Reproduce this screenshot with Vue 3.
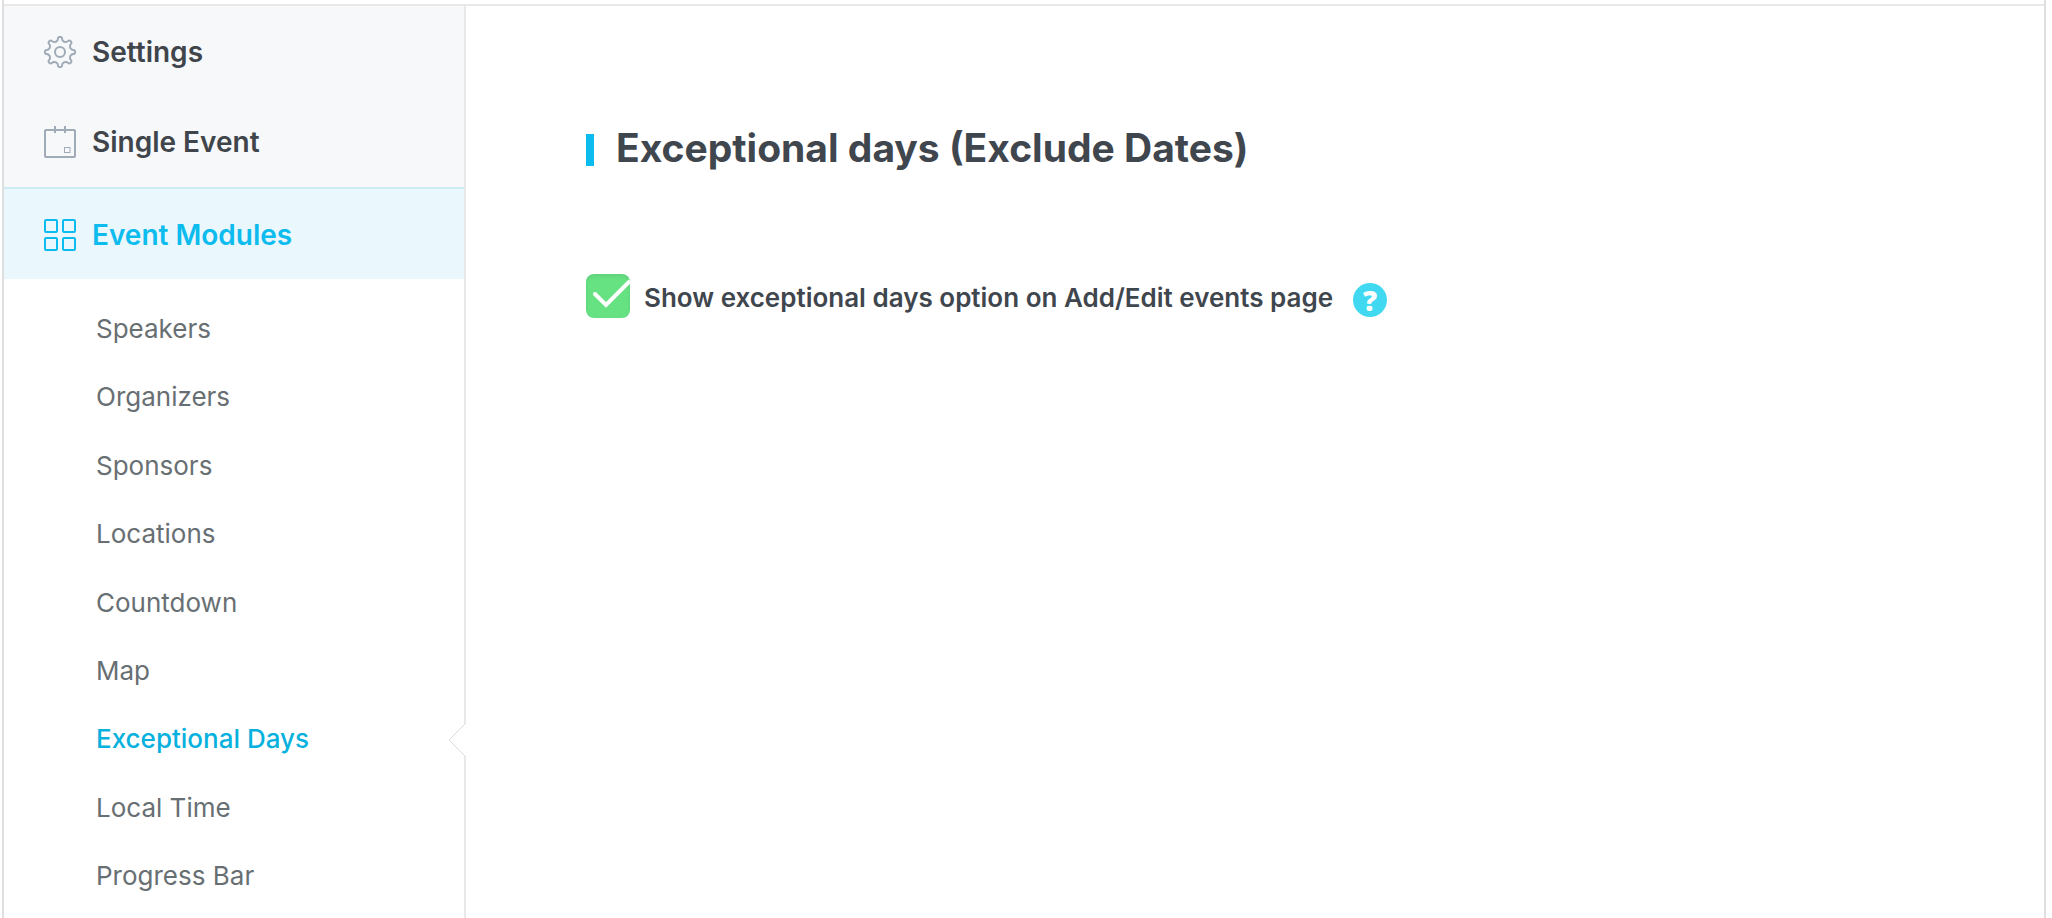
<template>
  <div class="settings-page">
    <div class="panel">
      <nav class="sidebar">
        <a v-for="item in sections" :key="item.id" href="#" class="section"
          :class="{ active: item.id === activeSection }" @click.prevent="activeSection = item.id">
          <svg v-if="item.id === 'settings'" class="icon" viewBox="0 0 32 32">
            <circle cx="16" cy="16" r="5" />
            <path :d="gearPath" />
          </svg>
          <svg v-else-if="item.id === 'single'" class="icon" viewBox="0 0 32 32">
            <rect x="1" y="4" width="30" height="27" rx="1" />
            <path d="M11 0v7M21 0v7" />
            <rect class="thin" x="20.5" y="21.5" width="5.5" height="5" />
          </svg>
          <svg v-else class="icon" viewBox="0 0 32 32">
            <rect x="1" y="1" width="12" height="12" rx="1" />
            <rect x="19" y="1" width="12" height="12" rx="1" />
            <rect x="1" y="19" width="12" height="12" rx="1" />
            <rect x="19" y="19" width="12" height="12" rx="1" />
          </svg>
          <span>{{ item.label }}</span>
        </a>

        <ul class="modules">
          <li v-for="name in modules" :key="name" :class="{ active: name === activeModule }">
            <a href="#" @click.prevent="activeModule = name">{{ name }}</a>
            <svg v-if="name === activeModule" class="notch" viewBox="0 0 18 34">
              <path class="notch-fill" d="M18 1H16V1L1 17L16 33H18Z" />
              <path class="notch-line" d="M17 1L1 17L17 33" />
            </svg>
          </li>
        </ul>
      </nav>

      <main class="content">
        <h4>Exceptional days (Exclude Dates)</h4>
        <div class="option">
          <input id="exceptional-days" v-model="enabled" type="checkbox">
          <svg v-if="enabled" class="tick" viewBox="0 0 44 44">
            <path d="M9 20L20 31L44 7" />
            <circle cx="9" cy="20" r="2" />
          </svg>
          <label for="exceptional-days">Show exceptional days option on Add/Edit events page</label>
          <button type="button" class="help" aria-label="Help">?</button>
        </div>
      </main>
    </div>
  </div>
</template>

<script setup>
import { ref } from 'vue'

const sections = [
  { id: 'settings', label: 'Settings' },
  { id: 'single', label: 'Single Event' },
  { id: 'modules', label: 'Event Modules' }
]

const modules = [
  'Speakers',
  'Organizers',
  'Sponsors',
  'Locations',
  'Countdown',
  'Map',
  'Exceptional Days',
  'Local Time',
  'Progress Bar'
]

const activeSection = ref('modules')
const activeModule = ref('Exceptional Days')
const enabled = ref(true)

// eight rounded teeth, one every 45 degrees
function buildGear() {
  const at = (r, deg) => {
    const a = (deg * Math.PI) / 180
    return `${(16 + r * Math.cos(a)).toFixed(2)} ${(16 + r * Math.sin(a)).toFixed(2)}`
  }
  let d = `M${at(11.6, -15)}`
  for (let i = 0; i < 8; i++) {
    const t = i * 45
    d += `Q${at(12, -10 + t)} ${at(13.4, -9 + t)}`
    d += `Q${at(15.2, -8 + t)} ${at(15.2, t)}`
    d += `Q${at(15.2, 8 + t)} ${at(13.4, 9 + t)}`
    d += `Q${at(12, 10 + t)} ${at(11.6, 15 + t)}`
    d += `Q${at(10.6, 22.5 + t)} ${at(11.6, 30 + t)}`
  }
  return d + 'Z'
}
const gearPath = buildGear()
</script>

<style>
body {
  margin: 0;
  background: #fff;
}
</style>

<style scoped>
.settings-page {
  box-sizing: border-box;
  height: 100vh;
  overflow: hidden;
  padding: 0 6px 0 2px;
  font-family: Inter, "Liberation Sans", sans-serif;
}

.panel {
  display: flex;
  box-sizing: border-box;
  min-height: 100%;
  padding-top: 4px;
  border: solid #dfdfdf;
  border-width: 0 2px;
  background: linear-gradient(#e8e8e8, #e8e8e8) 0 4px / 100% 2px no-repeat;
}

.sidebar {
  flex: 0 0 460px;
  padding-top: 2px;
  border-right: 2px solid #e8e8e8;
}

.section {
  display: flex;
  align-items: center;
  gap: 16px;
  height: 90px;
  padding-left: 40px;
  background: #f7f8fa;
  color: #3f454a;
  font-size: 28px;
  font-weight: 600;
  text-decoration: none;
}

.section:first-child {
  padding-top: 1px;
}

.section.active {
  height: 88px;
  padding-top: 2px;
  border-top: 2px solid #cdecf4;
  background: #eaf7fc;
  color: #0dbcee;
}

.icon {
  width: 32px;
  height: 32px;
  fill: none;
  stroke: #a0abb8;
  stroke-width: 2;
}

.active .icon {
  stroke: #0dbcee;
}

.icon .thin {
  stroke-width: 1;
}

.modules {
  margin: 0;
  padding: 16px 0;
  list-style: none;
}

.modules li {
  position: relative;
  padding: 16px 0 16px 92px;
  font-size: 26px;
  line-height: 1.4;
}

.modules a {
  color: #686f73;
  text-decoration: none;
}

.modules .active a {
  color: #07b1de;
  font-weight: 500;
}

.notch {
  position: absolute;
  top: 18px;
  right: -2px;
  width: 18px;
  height: 34px;
}

.notch-fill {
  fill: #fff;
}

.notch-line {
  fill: none;
  stroke: #dcdcdc;
}

.content {
  flex: 1;
  padding: 116px 120px;
  color: #3f464e;
}

h4 {
  display: flex;
  align-items: center;
  gap: 22px;
  margin: 0;
  font-size: 39px;
  font-weight: 700;
  line-height: 56px;
}

h4::before {
  width: 8px;
  height: 32px;
  margin-top: 4px;
  background: #0dbcee;
  content: "";
}

.option {
  display: flex;
  position: relative;
  align-items: center;
  margin-top: 98px;
}

.option input {
  width: 44px;
  height: 44px;
  margin: 0 14px 0 0;
  border-radius: 8px;
  background: #67e283;
  box-shadow: inset 0 2px 4px rgba(0, 0, 0, .08);
  appearance: none;
}

.tick {
  position: absolute;
  top: 0;
  left: 0;
  width: 44px;
  height: 44px;
  fill: none;
  stroke: #fff;
  stroke-width: 4;
  pointer-events: none;
}

.tick circle {
  fill: #fff;
  stroke: none;
}

.option label {
  padding-top: 2px;
  font-size: 26px;
  font-weight: 600;
}

.help {
  width: 34px;
  height: 34px;
  margin: 8px 0 0 20px;
  padding: 0;
  border: 0;
  border-radius: 50%;
  background: #40d9f1;
  color: #fff;
  font: 800 28px/34px "Open Sans", sans-serif;
}
</style>
